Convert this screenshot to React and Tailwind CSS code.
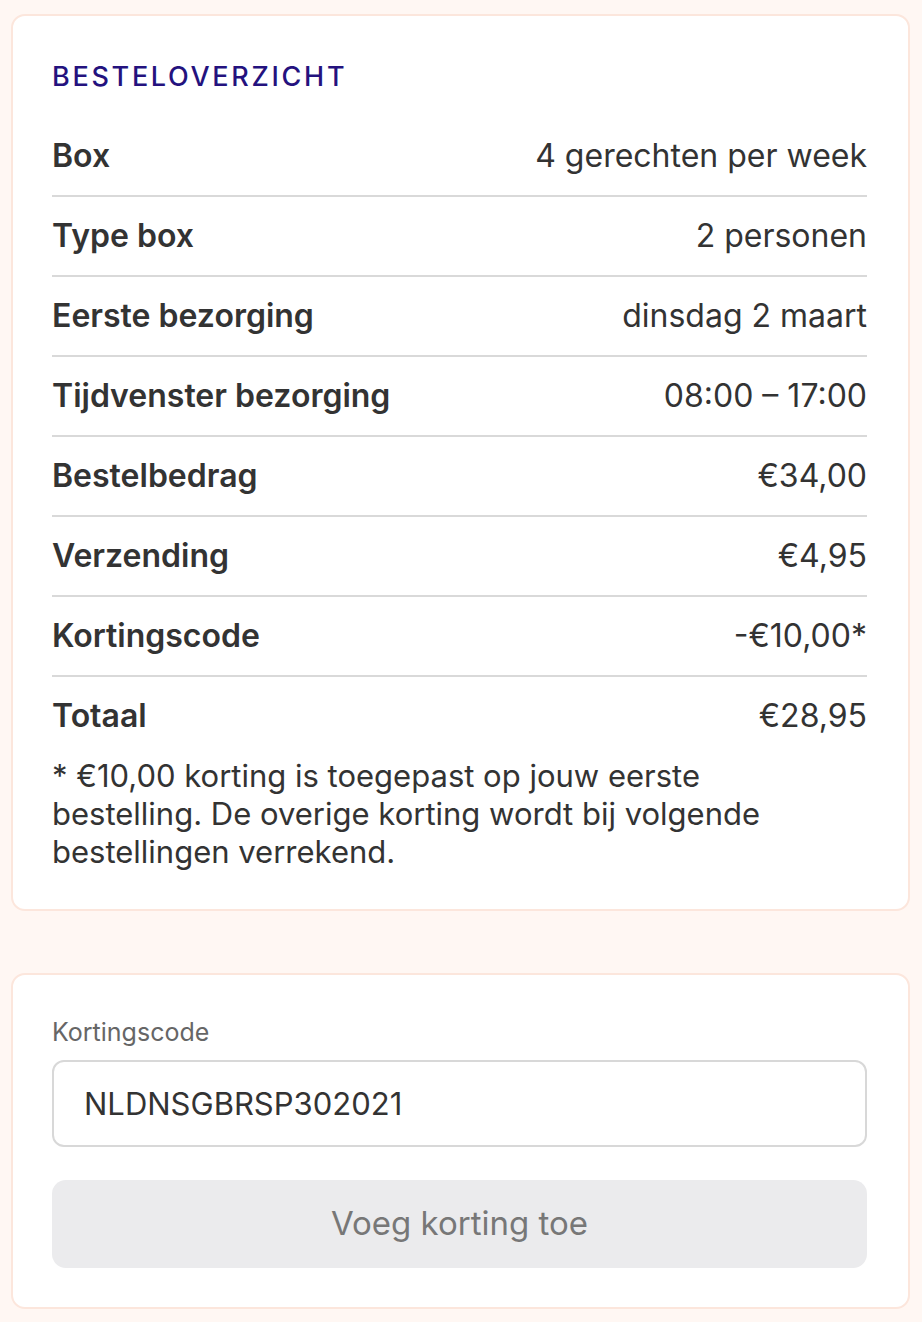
const ROWS = [
  ['Box', '4 gerechten per week'],
  ['Type box', '2 personen'],
  ['Eerste bezorging', 'dinsdag 2 maart'],
  ['Tijdvenster bezorging', '08:00 – 17:00'],
  ['Bestelbedrag', '€34,00'],
  ['Verzending', '€4,95'],
  ['Kortingscode', '-€10,00*'],
];

export default function App() {
  return (
    <div
      className="min-h-[1322px] bg-[#fff7f3] pl-[11px] pr-[12px] pt-[14px] pb-[13px] text-[#333333]"
      style={{ fontFamily: 'Inter, "Noto Sans", sans-serif' }}
    >
      {/* Order summary */}
      <section className="rounded-[14px] border-2 border-[#fce6dc] bg-white pl-[39px] pr-[41px] pt-[45px] pb-[38px]">
        <h2 className="mb-[24px] text-[27px] leading-[32px] font-medium tracking-[0.1em] text-[#24127e]">
          BESTELOVERZICHT
        </h2>
        {ROWS.map(([label, value]) => (
          <div
            key={label}
            className="flex h-[80px] items-center justify-between border-b-2 border-[#d9d9d9] text-[32px]"
          >
            <span className="font-semibold">{label}</span>
            <span>{value}</span>
          </div>
        ))}
        <div className="flex h-[78px] items-center justify-between text-[32px]">
          <span className="font-semibold">Totaal</span>
          <span>€28,95</span>
        </div>
        <p className="mt-[2px] max-w-[800px] text-[31px] leading-[38px]">
          * €10,00 korting is toegepast op jouw eerste bestelling. De overige korting wordt bij volgende
          bestellingen verrekend.
        </p>
      </section>

      {/* Discount code */}
      <section className="mt-[62px] rounded-[14px] border-2 border-[#fce6dc] bg-white pl-[39px] pr-[41px] pt-[43px] pb-[39px]">
        <label className="block text-[25px] leading-[28px] text-[#666666]">Kortingscode</label>
        <input
          defaultValue="NLDNSGBRSP302021"
          className="mt-[14px] block h-[87px] w-full rounded-[12px] border-2 border-[#d8d8d8] bg-white px-[30px] text-[31px] text-[#333333] outline-none"
        />
        <button className="mt-[33px] block h-[88px] w-full rounded-[14px] bg-[#ebebed] text-[33px] text-[#777777]">
          Voeg korting toe
        </button>
      </section>
    </div>
  );
}
